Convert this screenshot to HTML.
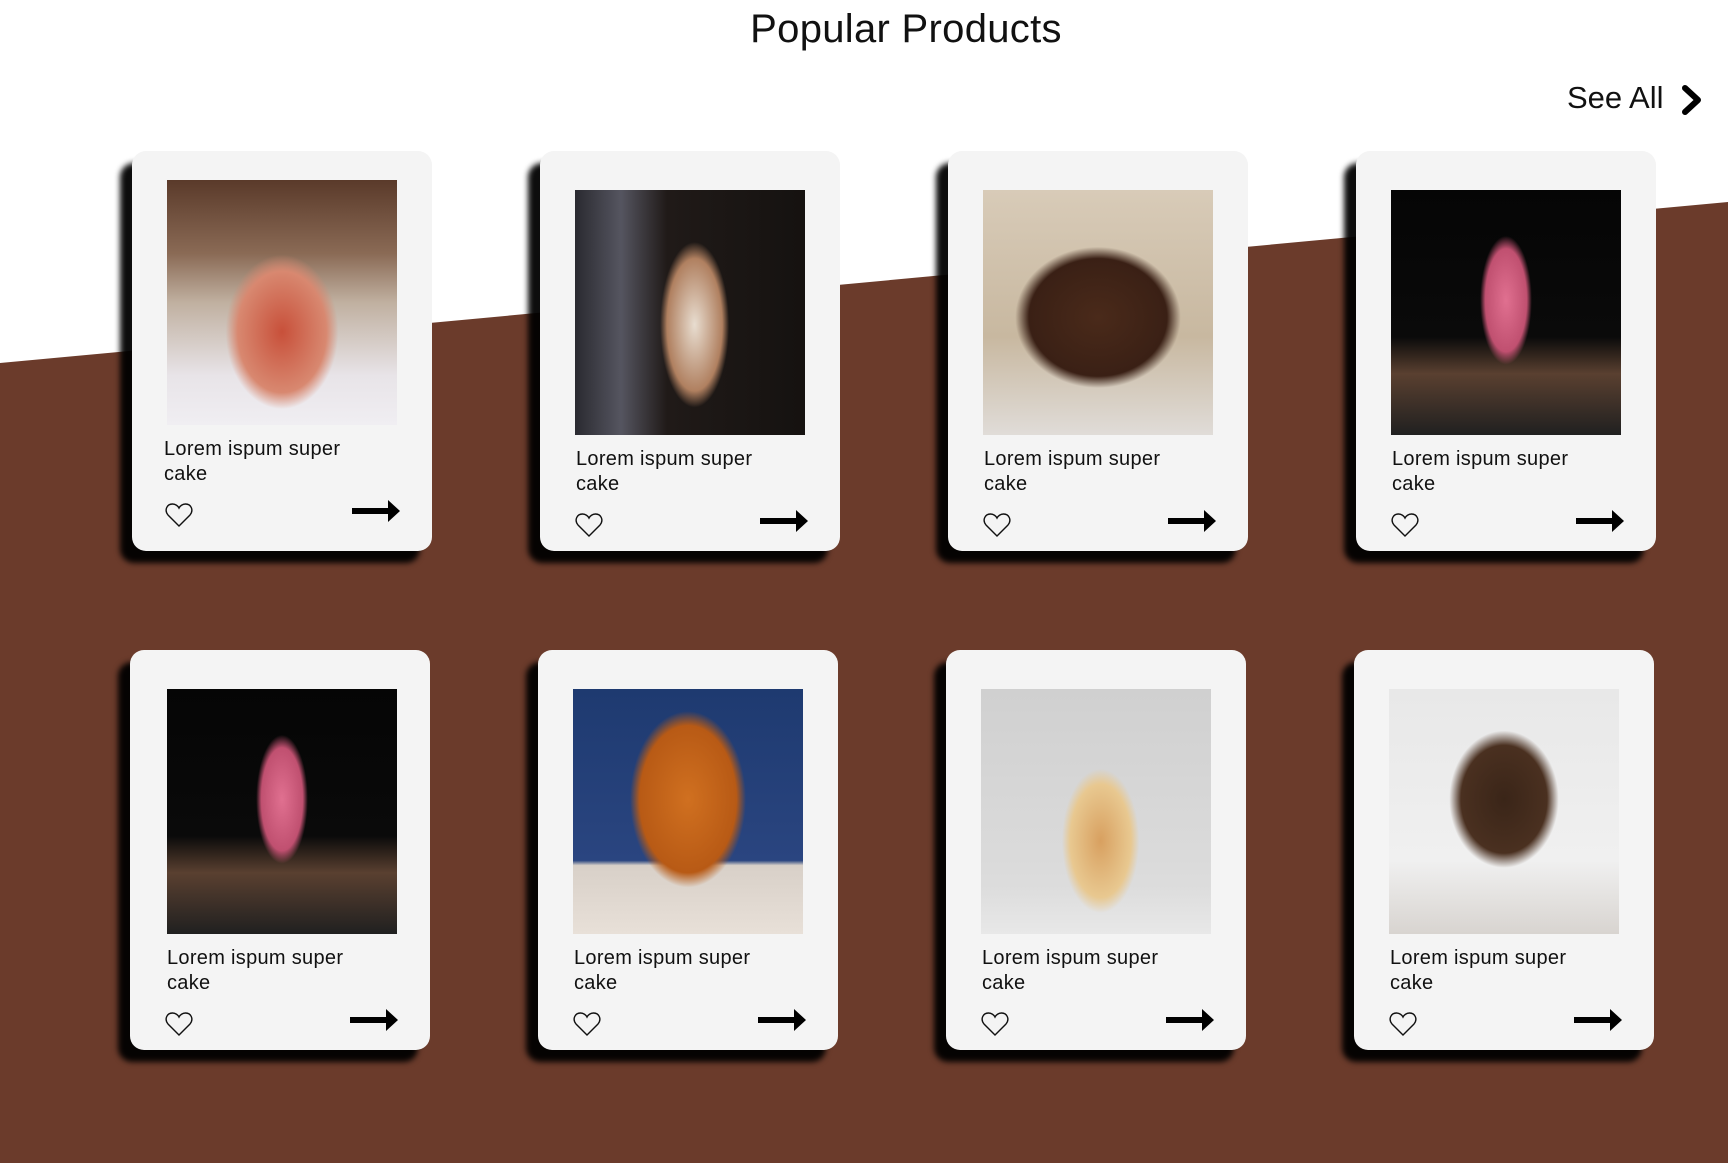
<!DOCTYPE html>
<html><head><meta charset="utf-8">
<style>
*{margin:0;padding:0;box-sizing:border-box}
body{width:1728px;height:1163px;position:relative;overflow:hidden;background:#fff;font-family:"Liberation Sans",sans-serif;color:#111}
.bg{position:absolute;left:0;top:0;width:1728px;height:1163px}
h1{position:absolute;top:7px;left:0;width:1812px;text-align:center;font-weight:400;font-size:40px;letter-spacing:0.3px}
.see{position:absolute;left:1567px;top:80px;font-size:31px;font-weight:300}
.chev{position:absolute;left:1680px;top:84px}
.card{position:absolute;width:300px;height:400px;background:#f4f4f4;border-radius:14px;box-shadow:-12px 12px 6px rgba(0,0,0,.95)}
.img{position:absolute;left:35px;top:39px;width:230px;height:245px}
.t{position:absolute;left:36px;top:296px;font-size:20px;line-height:25px;letter-spacing:.3px}
.heart{position:absolute;left:35px;top:361px}
.arr{position:absolute;left:220px;top:357px}
</style></head><body>
<svg class="bg" viewBox="0 0 1728 1163"><polygon points="0,363 1728,202 1728,1163 0,1163" fill="#6b3b2b"/></svg>
<h1>Popular Products</h1>
<div class="see">See All</div>
<svg class="chev" width="24" height="32" viewBox="0 0 24 32"><path d="M5 4 L18 16 L5 28" fill="none" stroke="#000" stroke-width="6" stroke-linecap="round" stroke-linejoin="round"/></svg>

<div class="card" style="left:132px;top:151px"><div class="img" style="top:29px;background:radial-gradient(ellipse 35% 45% at 50% 62%,#c8503a,#d88870 55%,transparent 70%),linear-gradient(#5a3a2a 0%,#8a6a55 30%,#c0b0a0 50%,#e8e4e8 80%,#f0eef2)"></div><div class="t" style="top:286px;left:32px">Lorem ispum super<br>cake</div><svg class="heart" style="top:351px;left:33px" width="28" height="26" viewBox="0 0 28 26"><path d="M14 24 L3 13 C-1 8 2 2 7.5 2 C10.5 2 13 4 14 6 C15 4 17.5 2 20.5 2 C26 2 29 8 25 13 Z" fill="none" stroke="#111" stroke-width="1.4"/></svg><svg class="arr" style="top:347px" width="50" height="26" viewBox="0 0 50 26"><path d="M0 10h36V2l12 11-12 11v-8H0z" fill="#000"/></svg></div>

<div class="card" style="left:540px;top:151px"><div class="img" style="background:radial-gradient(ellipse 20% 45% at 52% 55%,#e8ddd0,#b08060 60%,transparent 75%),linear-gradient(90deg,#2a2a30 0%,#555560 20%,#201a18 40%,#151210 100%)"></div><div class="t">Lorem ispum super<br>cake</div><svg class="heart" width="28" height="26" viewBox="0 0 28 26"><path d="M14 24 L3 13 C-1 8 2 2 7.5 2 C10.5 2 13 4 14 6 C15 4 17.5 2 20.5 2 C26 2 29 8 25 13 Z" fill="none" stroke="#111" stroke-width="1.4"/></svg><svg class="arr" width="50" height="26" viewBox="0 0 50 26"><path d="M0 10h36V2l12 11-12 11v-8H0z" fill="#000"/></svg></div>

<div class="card" style="left:948px;top:151px"><div class="img" style="background:radial-gradient(ellipse 50% 40% at 50% 52%,#4a2a1a,#3a2015 60%,transparent 72%),linear-gradient(#d8cbb8,#c8b8a0 60%,#e0dcd8)"></div><div class="t">Lorem ispum super<br>cake</div><svg class="heart" width="28" height="26" viewBox="0 0 28 26"><path d="M14 24 L3 13 C-1 8 2 2 7.5 2 C10.5 2 13 4 14 6 C15 4 17.5 2 20.5 2 C26 2 29 8 25 13 Z" fill="none" stroke="#111" stroke-width="1.4"/></svg><svg class="arr" width="50" height="26" viewBox="0 0 50 26"><path d="M0 10h36V2l12 11-12 11v-8H0z" fill="#000"/></svg></div>

<div class="card" style="left:1356px;top:151px"><div class="img" style="background:radial-gradient(ellipse 15% 35% at 50% 45%,#e07090,#c05070 60%,transparent 75%),linear-gradient(#050505 0%,#0a0a0a 60%,#5a4030 75%,#202020)"></div><div class="t">Lorem ispum super<br>cake</div><svg class="heart" width="28" height="26" viewBox="0 0 28 26"><path d="M14 24 L3 13 C-1 8 2 2 7.5 2 C10.5 2 13 4 14 6 C15 4 17.5 2 20.5 2 C26 2 29 8 25 13 Z" fill="none" stroke="#111" stroke-width="1.4"/></svg><svg class="arr" width="50" height="26" viewBox="0 0 50 26"><path d="M0 10h36V2l12 11-12 11v-8H0z" fill="#000"/></svg></div>

<div class="card" style="left:130px;top:650px"><div class="img" style="left:37px;background:radial-gradient(ellipse 15% 35% at 50% 45%,#e07090,#c05070 60%,transparent 75%),linear-gradient(#050505 0%,#0a0a0a 60%,#5a4030 75%,#202020)"></div><div class="t" style="left:37px">Lorem ispum super<br>cake</div><svg class="heart" width="28" height="26" viewBox="0 0 28 26"><path d="M14 24 L3 13 C-1 8 2 2 7.5 2 C10.5 2 13 4 14 6 C15 4 17.5 2 20.5 2 C26 2 29 8 25 13 Z" fill="none" stroke="#111" stroke-width="1.4"/></svg><svg class="arr" width="50" height="26" viewBox="0 0 50 26"><path d="M0 10h36V2l12 11-12 11v-8H0z" fill="#000"/></svg></div>

<div class="card" style="left:538px;top:650px"><div class="img" style="background:radial-gradient(ellipse 35% 50% at 50% 45%,#d07020,#b85a15 60%,transparent 72%),linear-gradient(#1e3a70,#2a4580 70%,#d8d0c8 72%,#e8e0d8)"></div><div class="t">Lorem ispum super<br>cake</div><svg class="heart" width="28" height="26" viewBox="0 0 28 26"><path d="M14 24 L3 13 C-1 8 2 2 7.5 2 C10.5 2 13 4 14 6 C15 4 17.5 2 20.5 2 C26 2 29 8 25 13 Z" fill="none" stroke="#111" stroke-width="1.4"/></svg><svg class="arr" width="50" height="26" viewBox="0 0 50 26"><path d="M0 10h36V2l12 11-12 11v-8H0z" fill="#000"/></svg></div>

<div class="card" style="left:946px;top:650px"><div class="img" style="background:radial-gradient(ellipse 24% 42% at 52% 62%,#d8a060,#e8c890 55%,transparent 70%),linear-gradient(#d0d0d0,#dcdcdc 80%,#e8e8e8)"></div><div class="t">Lorem ispum super<br>cake</div><svg class="heart" width="28" height="26" viewBox="0 0 28 26"><path d="M14 24 L3 13 C-1 8 2 2 7.5 2 C10.5 2 13 4 14 6 C15 4 17.5 2 20.5 2 C26 2 29 8 25 13 Z" fill="none" stroke="#111" stroke-width="1.4"/></svg><svg class="arr" width="50" height="26" viewBox="0 0 50 26"><path d="M0 10h36V2l12 11-12 11v-8H0z" fill="#000"/></svg></div>

<div class="card" style="left:1354px;top:650px"><div class="img" style="background:radial-gradient(ellipse 34% 40% at 50% 45%,#3a2518,#4a3020 55%,transparent 70%),linear-gradient(#e8e8e8,#f0f0f0 70%,#d8d4d0)"></div><div class="t">Lorem ispum super<br>cake</div><svg class="heart" width="28" height="26" viewBox="0 0 28 26"><path d="M14 24 L3 13 C-1 8 2 2 7.5 2 C10.5 2 13 4 14 6 C15 4 17.5 2 20.5 2 C26 2 29 8 25 13 Z" fill="none" stroke="#111" stroke-width="1.4"/></svg><svg class="arr" width="50" height="26" viewBox="0 0 50 26"><path d="M0 10h36V2l12 11-12 11v-8H0z" fill="#000"/></svg></div>
</body></html>
